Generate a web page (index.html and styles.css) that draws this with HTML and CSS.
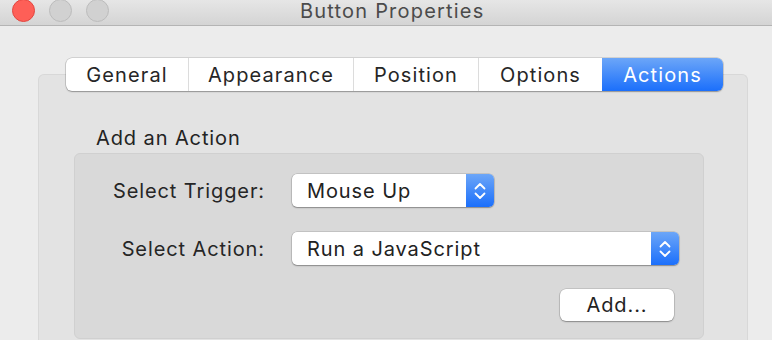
FILE: index.html
```html
<!DOCTYPE html>
<html lang="en">
<head>
    <meta charset="UTF-8">
    <title>Button Properties</title>
    <link rel="stylesheet" href="styles.css">
</head>
<body>
    <header class="titlebar">
        <span class="light light-close"></span>
        <span class="light"></span>
        <span class="light"></span>
        <h1 class="title">Button Properties</h1>
    </header>

    <div class="panel">
        <div class="tabs">
            <div class="tab tab-general">General</div>
            <div class="tab tab-appearance">Appearance</div>
            <div class="tab tab-position">Position</div>
            <div class="tab tab-options">Options</div>
            <div class="tab tab-actions active">Actions</div>
        </div>

        <div class="section-label">Add an Action</div>

        <div class="group">
            <div class="form-grid">
                <label class="field-label">Select Trigger:</label>
                <div class="popup popup-trigger">
                    <span class="popup-text">Mouse Up</span>
                    <span class="stepper">
                        <svg width="14" height="20" viewBox="0 0 14 20">
                            <path d="M2.5 7.5 L7 3 L11.5 7.5" fill="none" stroke="#fff" stroke-width="1.8" stroke-linecap="round" stroke-linejoin="round"/>
                            <path d="M2.5 12.5 L7 17 L11.5 12.5" fill="none" stroke="#fff" stroke-width="1.8" stroke-linecap="round" stroke-linejoin="round"/>
                        </svg>
                    </span>
                </div>

                <label class="field-label">Select Action:</label>
                <div class="popup popup-action">
                    <span class="popup-text">Run a JavaScript</span>
                    <span class="stepper">
                        <svg width="14" height="20" viewBox="0 0 14 20">
                            <path d="M2.5 7.5 L7 3 L11.5 7.5" fill="none" stroke="#fff" stroke-width="1.8" stroke-linecap="round" stroke-linejoin="round"/>
                            <path d="M2.5 12.5 L7 17 L11.5 12.5" fill="none" stroke="#fff" stroke-width="1.8" stroke-linecap="round" stroke-linejoin="round"/>
                        </svg>
                    </span>
                </div>
            </div>

            <div class="button-row">
                <button type="button" class="push-button">Add...</button>
            </div>
        </div>
    </div>
</body>
</html>
```

FILE: styles.css
```css
html, body {
    margin: 0;
    padding: 0;
}

body {
    width: 772px;
    height: 340px;
    overflow: hidden;
    background-color: #ececec;
    font-family: Inter, "Noto Sans", sans-serif;
    font-size: 20px;
    letter-spacing: 0.9px;
    color: #222;
}

.titlebar {
    display: flex;
    align-items: flex-start;
    height: 25px;
    padding-left: 12px;
    background: linear-gradient(#e6e6e6, #d4d4d4);
    border-bottom: 1px solid #b4b4b4;
    box-sizing: content-box;
}

.light {
    width: 21px;
    height: 21px;
    margin-top: -1px;
    margin-right: 14px;
    border-radius: 50%;
    background-color: #d1d1d1;
    border: 0.5px solid #bcbcbc;
}

.light-close {
    background-color: #fe5f57;
    border-color: #e2463f;
}

.title {
    margin: 0 0 0 177px;
    font-size: 20px;
    font-weight: 400;
    letter-spacing: 1.2px;
    line-height: 23px;
    color: #4b4b4b;
}

.panel {
    margin: 48px 0 0 38px;
    width: 708px;
    height: 266px;
    background-color: #e3e3e3;
    border: 1px solid #d8d8d8;
    border-bottom: none;
    border-radius: 6px 6px 0 0;
}

.tabs {
    display: flex;
    margin: -17px 0 0 27px;
    width: 657px;
    height: 33px;
    background-color: #fff;
    border-radius: 6px;
    box-shadow: 0 0 0 0.5px rgba(0, 0, 0, 0.22), 0 1px 1.5px rgba(0, 0, 0, 0.28);
    overflow: hidden;
}

.tab {
    display: flex;
    align-items: center;
    justify-content: center;
    letter-spacing: 1.1px;
    color: #262626;
    border-right: 1px solid #dcdcdc;
    box-sizing: border-box;
}

.tab-general { width: 123px; }
.tab-appearance { width: 165px; }
.tab-position { width: 125px; }
.tab-options { width: 123px; border-right: none; }
.tab-actions { flex: 1; border-right: none; }

.tab.active {
    background: linear-gradient(#6ca6f8, #1b6ffb);
    color: #fff;
}

.section-label {
    margin: 35px 0 0 57px;
    line-height: 24px;
    color: #232323;
}

.group {
    margin: 3px 0 0 35px;
    width: 628px;
    height: 184px;
    background-color: #d9d9d9;
    border: 1px solid #d0d0d0;
    border-radius: 6px;
}

.form-grid {
    display: grid;
    grid-template-columns: 190px auto;
    column-gap: 27px;
    row-gap: 25px;
    align-items: center;
    justify-items: start;
    margin-top: 20px;
}

.field-label {
    justify-self: end;
    color: #262626;
}

.popup {
    display: flex;
    align-items: center;
    height: 33px;
    background-color: #fff;
    border-radius: 5px;
    box-shadow: 0 0 0 0.5px rgba(0, 0, 0, 0.2), 0 1px 1.5px rgba(0, 0, 0, 0.3);
    overflow: hidden;
}

.popup-trigger { width: 202px; }
.popup-action { width: 387px; }

.popup-text {
    flex: 1;
    padding-left: 15px;
    color: #222;
}

.stepper {
    display: flex;
    align-items: center;
    justify-content: center;
    width: 28px;
    height: 100%;
    background: linear-gradient(#6ca6f8, #1b6ffb);
}

.button-row {
    display: flex;
    justify-content: flex-end;
    margin-top: 24px;
    padding-right: 29px;
}

.push-button {
    width: 114px;
    height: 32px;
    padding: 0;
    font-family: inherit;
    font-size: 20px;
    letter-spacing: 0.9px;
    color: #222;
    background-color: #fff;
    border: none;
    border-radius: 6px;
    box-shadow: 0 0 0 0.5px rgba(0, 0, 0, 0.2), 0 1px 1.5px rgba(0, 0, 0, 0.3);
}
```
